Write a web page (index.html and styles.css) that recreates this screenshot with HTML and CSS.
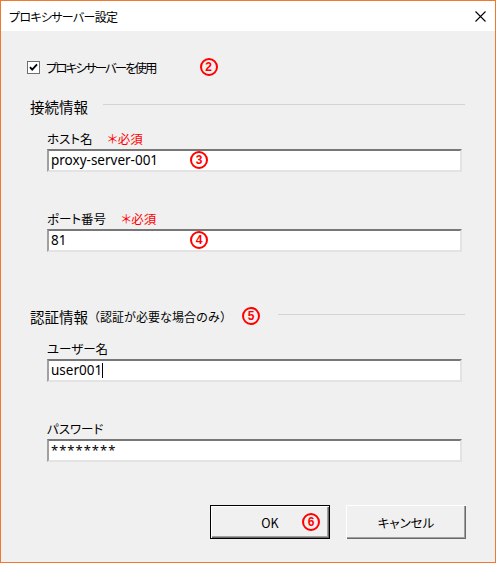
FILE: index.html
```html
<!DOCTYPE html>
<html lang="ja">
<head>
    <meta charset="UTF-8">
    <title>プロキシサーバー設定</title>
    <link rel="stylesheet" href="styles.css">
</head>
<body>
    <div class="window">
        <div class="titlebar">
            <span class="title">プロキシサーバー設定</span>
            <svg class="close" width="11" height="11" viewBox="0 0 11 11">
                <path d="M0.5 0.5L10.5 10.5M10.5 0.5L0.5 10.5" stroke="#000" stroke-width="1.1" fill="none"/>
            </svg>
        </div>

        <div class="check-row">
            <span class="checkbox">
                <svg width="11" height="11" viewBox="0 0 11 11">
                    <path d="M2 5.2L4.2 7.6L9 2.4" stroke="#000" stroke-width="1.8" fill="none"/>
                </svg>
            </span>
            <span class="check-label">プロキシサーバーを使用</span>
            <span class="mark mark-use">2</span>
        </div>

        <div class="section">
            <span class="section-title">接続情報</span>
            <span class="rule rule-first"></span>
        </div>

        <div class="field field-top">
            <div class="label">ホスト名<span class="required">＊必須</span></div>
            <div class="textbox">proxy-server-001<span class="mark mark-in">3</span></div>
        </div>

        <div class="field">
            <div class="label">ポート番号<span class="required">＊必須</span></div>
            <div class="textbox">81<span class="mark mark-in">4</span></div>
        </div>

        <div class="section section-auth">
            <span class="section-title">認証情報</span>
            <span class="section-note">（認証が必要な場合のみ）</span>
            <span class="mark mark-auth">5</span>
            <span class="rule rule-auth"></span>
        </div>

        <div class="field field-top">
            <div class="label">ユーザー名</div>
            <div class="textbox">user001<span class="caret"></span></div>
        </div>

        <div class="field">
            <div class="label">パスワード</div>
            <div class="textbox password">********</div>
        </div>

        <div class="buttons">
            <div class="button default">OK<span class="mark mark-ok">6</span></div>
            <div class="button">キャンセル</div>
        </div>
    </div>
</body>
</html>
```

FILE: styles.css
```css
body {
    margin: 0;
    background-color: #f0f0f0;
    font-family: "Noto Sans CJK JP", "Liberation Sans", sans-serif;
    font-feature-settings: "palt";
    color: #000;
}
.window {
    width: 496px;
    height: 563px;
    box-sizing: border-box;
    border: 1px solid #ee7a30;
    background-color: #f0f0f0;
    display: flex;
    flex-direction: column;
}
.titlebar {
    height: 30px;
    flex-shrink: 0;
    background-color: #fff;
    display: flex;
    align-items: center;
    justify-content: space-between;
    padding: 0 9px 0 8px;
    font-size: 12px;
}
.title {
    letter-spacing: -0.7px;
}
.close {
    display: block;
}
.check-row {
    margin-top: 27px;
    height: 18px;
    padding-left: 26px;
    display: flex;
    align-items: center;
    font-size: 12.5px;
}
.check-label {
    letter-spacing: -2px;
}
.checkbox {
    width: 13px;
    height: 13px;
    box-sizing: border-box;
    border: 1px solid #6f6f6f;
    background-color: #fff;
    display: flex;
    align-items: center;
    justify-content: center;
    margin-right: 6px;
}
.checkbox svg {
    display: block;
}
.section {
    margin-top: 21px;
    height: 18px;
    padding: 0 30px 0 29px;
    display: flex;
    align-items: center;
}
.section-title {
    font-size: 14.5px;
}
.section-note {
    font-size: 12px;
    font-feature-settings: normal;
}
.rule {
    flex: 1;
    height: 1px;
    background-color: #d4d4d4;
    margin-bottom: 3px;
}
.rule-first {
    margin-left: 15px;
}
.rule-auth {
    margin-left: 18px;
}
.section-auth {
    margin-top: 55px;
}
.field {
    margin-top: 38px;
    padding: 0 33px 0 46px;
}
.field-top {
    margin-top: 15px;
}
.label {
    height: 17px;
    line-height: 17px;
    font-size: 12.5px;
    margin-bottom: 2px;
}
.required {
    color: #ff0000;
    margin-left: 15px;
}
.textbox {
    position: relative;
    height: 23px;
    box-sizing: border-box;
    border: 2px solid;
    border-color: #777 #e3e3e3 #e3e3e3 #a0a0a0;
    background-color: #fff;
    padding-left: 2px;
    line-height: 19px;
    font-size: 13.5px;
    font-family: "Noto Sans", "Liberation Sans", sans-serif;
}
.caret {
    display: inline-block;
    width: 1px;
    height: 15px;
    background-color: #000;
    vertical-align: -3px;
}
.password {
    font-size: 13px;
    letter-spacing: 1px;
}
.mark {
    display: inline-flex;
    align-items: center;
    justify-content: center;
    width: 18px;
    height: 18px;
    box-sizing: border-box;
    border: 2px solid #ff0000;
    border-radius: 50%;
    color: #ff0000;
    font-family: "Liberation Sans", sans-serif;
    font-weight: bold;
    font-size: 12px;
    line-height: 1;
    letter-spacing: 0;
}
.mark-use {
    margin-left: 44px;
}
.mark-auth {
    margin-left: 10px;
}
.mark-in {
    position: absolute;
    left: 141px;
    top: 0;
}
.buttons {
    margin-top: 43px;
    padding-right: 29px;
    display: flex;
    justify-content: flex-end;
    gap: 16px;
}
.button {
    position: relative;
    width: 120px;
    height: 34px;
    box-sizing: border-box;
    background-color: #f0f0f0;
    display: flex;
    align-items: center;
    justify-content: center;
    font-size: 12.5px;
    box-shadow: inset 1px 1px 0 #fff, inset -1px -1px 0 #696969, inset -2px -2px 0 #a0a0a0;
}
.default {
    border: 1px solid #000;
}
.mark-ok {
    position: absolute;
    left: 91px;
    top: 7px;
}
```
